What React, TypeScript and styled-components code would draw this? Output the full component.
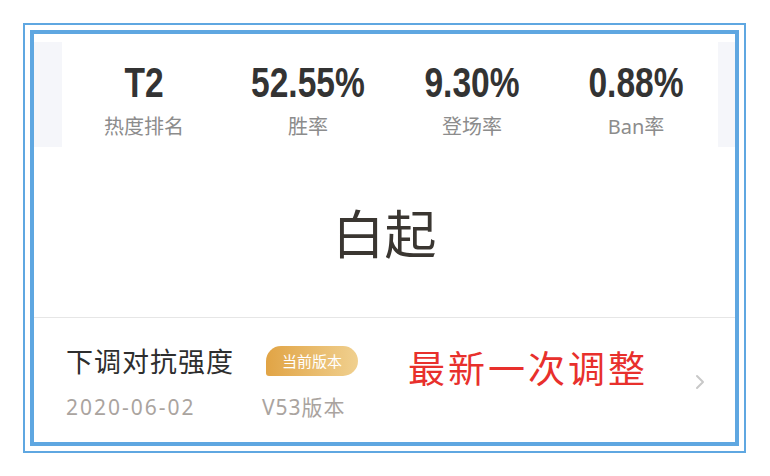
import React from "react";
import styled, { createGlobalStyle } from "styled-components";

const GlobalStyle = createGlobalStyle`
  html, body {
    margin: 0;
    padding: 0;
    background: #ffffff;
  }
  body {
    font-family: "Noto Sans", "Noto Sans CJK SC", sans-serif;
  }
`;

const stats = [
  { value: "T2", label: "热度排名" },
  { value: "52.55%", label: "胜率" },
  { value: "9.30%", label: "登场率" },
  { value: "0.88%", label: "Ban率" },
];

function App() {
  return (
    <>
      <GlobalStyle />
      <Page>
        <OuterFrame>
          <InnerFrame>
            <StatsStrip>
              <StatsCard>
                {stats.map(s => (
                  <StatCell key={s.label}>
                    <StatValue>{s.value}</StatValue>
                    <StatLabel>{s.label}</StatLabel>
                  </StatCell>
                ))}
              </StatsCard>
            </StatsStrip>

            <Hero>
              <HeroName>白起</HeroName>
            </Hero>

            <ChangeRow>
              <ChangeInfo>
                <ChangeTitle>下调对抗强度</ChangeTitle>
                <Badge>当前版本</Badge>
                <ChangeDate>2020-06-02</ChangeDate>
                <ChangeVersion>V53版本</ChangeVersion>
              </ChangeInfo>

              <Annotation>最新一次调整</Annotation>

              <Chevron viewBox="0 0 10 16" aria-hidden>
                <polyline points="2,2 8,8 2,14" />
              </Chevron>
            </ChangeRow>
          </InnerFrame>
        </OuterFrame>
      </Page>
    </>
  );
}

const Page = styled.div`
  padding: 23px 0 0 23px;
  width: 770px;
  height: 476px;
  box-sizing: border-box;
`;

const OuterFrame = styled.div`
  width: 723px;
  height: 430px;
  box-sizing: border-box;
  border: 2px solid #5fa7e1;
  padding: 5px;
`;

const InnerFrame = styled.div`
  display: flex;
  flex-direction: column;
  height: 100%;
  box-sizing: border-box;
  border: 4px solid #5fa7e1;
  padding-top: 8px;
  background: #ffffff;
`;

const StatsStrip = styled.div`
  display: flex;
  background: #f5f6fa;
  padding: 0 17px 0 28px;
  height: 105px;
`;

const StatsCard = styled.div`
  flex: 1;
  display: grid;
  grid-template-columns: repeat(4, 1fr);
  background: #ffffff;
`;

const StatCell = styled.div`
  display: flex;
  flex-direction: column;
  align-items: center;
  padding-top: 17px;
`;

// condensed display digits: narrow Liberation Sans bold
const StatValue = styled.div`
  font-family: "Liberation Sans", Arial, sans-serif;
  font-weight: 700;
  font-size: 43px;
  line-height: 46px;
  color: #333333;
  transform: scaleX(0.78);
`;

const StatLabel = styled.div`
  margin-top: 10px;
  font-size: 20px;
  line-height: 24px;
  color: #8c8c8c;
`;

const Hero = styled.div`
  height: 170px;
  display: flex;
  align-items: center;
  justify-content: center;
  border-bottom: 1px solid #e6e6e6;
`;

const HeroName = styled.div`
  font-family: "Noto Sans CJK SC", sans-serif;
  font-size: 52px;
  line-height: 60px;
  color: #3a3631;
`;

const ChangeRow = styled.div`
  flex: 1;
  display: flex;
  align-items: flex-start;
  padding: 26px 30px 0 32px;
`;

const ChangeInfo = styled.div`
  display: grid;
  grid-template-columns: 196px auto;
  row-gap: 15px;
  align-items: center;
`;

const ChangeTitle = styled.div`
  font-family: "Noto Sans CJK SC", sans-serif;
  font-size: 27px;
  line-height: 34px;
  letter-spacing: 1px;
  color: #2e2e2e;
`;

const Badge = styled.div`
  justify-self: start;
  margin-left: 4px;
  padding: 0 16px;
  height: 30px;
  line-height: 30px;
  border-radius: 15px 15px 15px 3px;
  background: linear-gradient(90deg, #e1a445 0%, #f0d08f 100%);
  color: #ffffff;
  font-size: 15px;
`;

const ChangeDate = styled.div`
  font-size: 21px;
  line-height: 28px;
  letter-spacing: 2px;
  color: #aaa49f;
`;

const ChangeVersion = styled.div`
  font-size: 21px;
  line-height: 28px;
  letter-spacing: 1px;
  color: #aaa49f;
`;

const Annotation = styled.div`
  margin-left: 50px;
  font-family: "Noto Sans CJK SC", sans-serif;
  font-weight: 400;
  font-size: 37px;
  line-height: 46px;
  letter-spacing: 3px;
  color: #e8302c;
`;

const Chevron = styled.svg`
  margin-left: auto;
  margin-top: 30px;
  width: 10px;
  height: 16px;
  fill: none;
  stroke: #c8c8c8;
  stroke-width: 2;
  stroke-linecap: round;
  stroke-linejoin: round;
`;

export default App;
